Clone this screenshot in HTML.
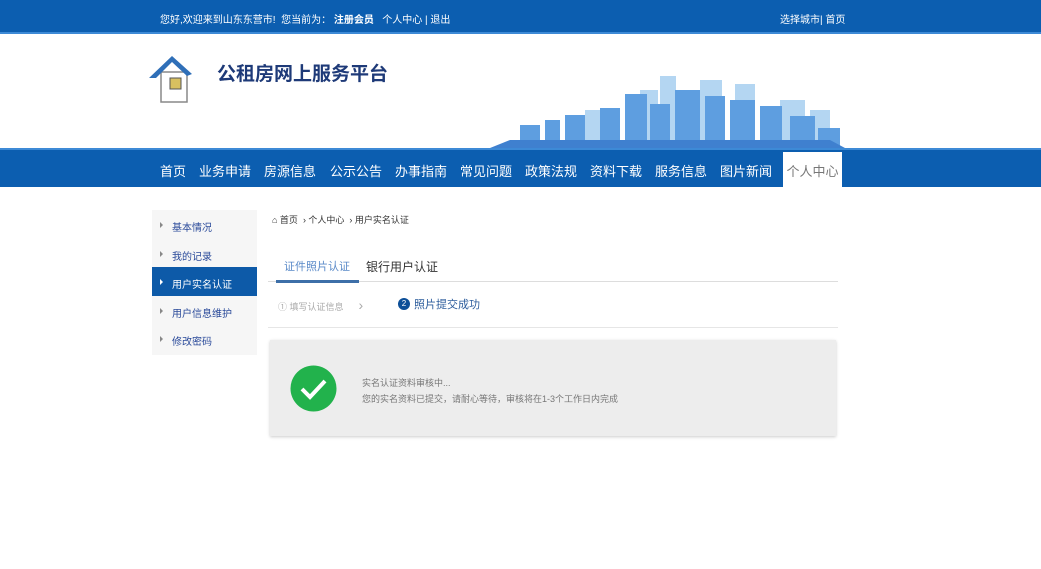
<!DOCTYPE html>
<html><head><meta charset="utf-8"><style>
*{margin:0;padding:0;box-sizing:border-box}
body{width:1041px;height:569px;background:#fff;font-family:"Liberation Sans","Noto Sans CJK SC",sans-serif;position:relative;overflow:hidden}
.abs{position:absolute}
.top{left:0;top:0;width:1041px;height:34px;background:#0c5eb0;border-bottom:2px solid #3d8ad6}
.top span{position:absolute;top:11px;font-size:10px;color:#fff}
.nav{left:0;top:148px;width:1041px;height:39px;background:#0c5eb0;border-top:2px solid #3d8ad6}
.nav span{position:absolute;top:11px;font-size:13px;color:#fff}
.side{left:152px;top:210px;width:105px;height:145px;background:#f6f6f6}
.side div{height:28.6px;font-size:10px;color:#2a4a9a;padding:9px 0 0 20px;position:relative}
.side div:before{content:"";position:absolute;left:8px;top:12px;border-left:3px solid #888;border-top:3px solid transparent;border-bottom:3px solid transparent}
.side div.on{background:#0d5aa8;color:#fff}
.side div.on:before{border-left-color:#fff}
</style></head><body>
<div class="abs top">
<span style="left:160px">您好,欢迎来到山东东营市!&nbsp;&nbsp;您当前为：&nbsp;<b>注册会员</b>&nbsp;&nbsp;&nbsp;个人中心 | 退出</span>
<span style="left:780px">选择城市| 首页</span>
</div>
<svg class="abs" style="left:148px;top:52px" width="52" height="52" viewBox="0 0 52 52">
<rect x="13" y="20" width="26" height="30" fill="#fff" stroke="#888" stroke-width="1.5"/>
<path d="M1 26 L24 4 L44 22 L39 24 L24 10 L8 26Z" fill="#2f6fb8"/>
<rect x="22" y="26" width="11" height="11" fill="#d8c060" stroke="#555"/>
</svg>
<div class="abs" style="left:217px;top:59px;font-size:19px;font-weight:bold;color:#1e3a78">公租房网上服务平台</div>
<svg class="abs" style="left:490px;top:70px" width="355" height="78" viewBox="0 0 355 78">
<g fill="#b4d6f2"><rect x="95" y="40" width="20" height="38"/><rect x="150" y="20" width="18" height="58"/><rect x="170" y="6" width="16" height="72"/><rect x="210" y="10" width="22" height="68"/><rect x="245" y="14" width="20" height="64"/><rect x="290" y="30" width="25" height="48"/><rect x="320" y="40" width="20" height="38"/></g>
<g fill="#5e9ee0"><rect x="30" y="55" width="20" height="23"/><rect x="55" y="50" width="15" height="28"/><rect x="75" y="45" width="20" height="33"/><rect x="110" y="38" width="20" height="40"/><rect x="135" y="24" width="22" height="54"/><rect x="160" y="34" width="20" height="44"/><rect x="185" y="20" width="25" height="58"/><rect x="215" y="26" width="20" height="52"/><rect x="240" y="30" width="25" height="48"/><rect x="270" y="36" width="22" height="42"/><rect x="300" y="46" width="25" height="32"/><rect x="328" y="58" width="22" height="20"/></g>
<path d="M0 78 L20 70 L340 70 L355 78Z" fill="#3f80cf"/>
</svg>
<div class="abs nav">
<span style="left:160px">首页</span><span style="left:199px">业务申请</span><span style="left:264px">房源信息</span><span style="left:330px">公示公告</span><span style="left:395px">办事指南</span><span style="left:460px">常见问题</span><span style="left:525px">政策法规</span><span style="left:590px">资料下载</span><span style="left:655px">服务信息</span><span style="left:720px">图片新闻</span>
<div style="position:absolute;left:783px;top:2px;width:59px;height:37px;background:#fff;color:#777;font-size:13px;padding-top:9px;text-align:center">个人中心</div>
</div>
<div class="abs side">
<div>基本情况</div><div>我的记录</div><div class="on">用户实名认证</div><div>用户信息维护</div><div>修改密码</div>
</div>
<div class="abs" style="left:272px;top:213px;font-size:9px;color:#333">⌂ 首页 &nbsp;› 个人中心 &nbsp;› 用户实名认证</div>
<div class="abs" style="left:268px;top:247px;width:570px;height:35px;border-bottom:1px solid #ddd"></div>
<div class="abs" style="left:284px;top:258px;font-size:11px;color:#5a8ac8">证件照片认证</div>
<div class="abs" style="left:366px;top:258px;font-size:12px;color:#333">银行用户认证</div>
<div class="abs" style="left:276px;top:280px;width:83px;height:3px;background:#3d6fa8"></div>
<div class="abs" style="left:278px;top:297px;font-size:9px;color:#aaa">① 填写认证信息 &nbsp;&nbsp;&nbsp;&nbsp;&nbsp;<span style="font-size:14px">›</span></div>
<div class="abs" style="left:398px;top:298px;width:12px;height:12px;border-radius:50%;background:#0d4f98;color:#fff;font-size:8px;text-align:center;line-height:12px">2</div>
<div class="abs" style="left:414px;top:296px;font-size:11px;color:#2c5c9c">照片提交成功</div>
<div class="abs" style="left:268px;top:327px;width:570px;height:1px;background:#e6e6e6"></div>
<div class="abs" style="left:270px;top:340px;width:566px;height:96px;background:#ededed;box-shadow:0 1px 3px #ccc"></div>
<svg class="abs" style="left:290px;top:365px" width="47" height="47"><circle cx="23.5" cy="23.5" r="23" fill="#22b24c"/><path d="M12 24 L20 32 L35 16" stroke="#fff" stroke-width="4" fill="none"/></svg>
<div class="abs" style="left:362px;top:376px;font-size:9px;color:#777">实名认证资料审核中...</div>
<div class="abs" style="left:362px;top:392px;font-size:9px;color:#777">您的实名资料已提交，请耐心等待，审核将在1-3个工作日内完成</div>
</body></html>
